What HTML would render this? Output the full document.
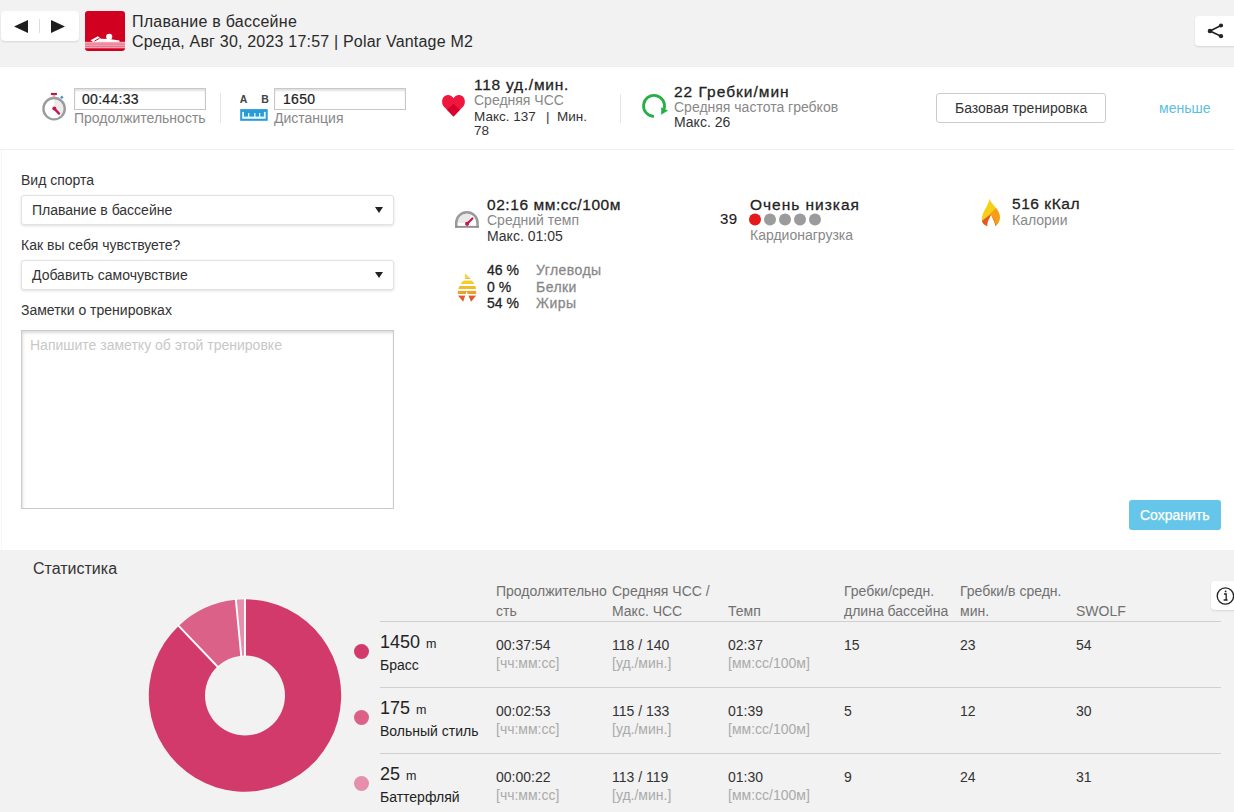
<!DOCTYPE html>
<html><head><meta charset="utf-8">
<style>
*{margin:0;padding:0;box-sizing:border-box}
html,body{width:1234px;height:812px;overflow:hidden}
body{position:relative;background:#f2f2f2;font-family:"Liberation Sans",sans-serif;color:#333}
.a{position:absolute;white-space:nowrap}
.t{position:absolute;white-space:nowrap;line-height:20px}
#hdr{position:absolute;left:0;top:0;width:1234px;height:67px;background:#f2f2f2;border-bottom:1px solid #efefef}
#band{position:absolute;left:0;top:67px;width:1234px;height:83px;background:#fff;border-bottom:1px solid #f0f0f0}
#main{position:absolute;left:0;top:150px;width:1234px;height:400px;background:#fff}
.box{position:absolute;background:#fff;border-radius:4px;box-shadow:0 1px 2px rgba(0,0,0,.12)}
.inp{position:absolute;border:1px solid #c8c8c8;box-shadow:inset 0 2px 2px rgba(0,0,0,.12);background:#fff}
.vdiv{position:absolute;width:1px;background:#e6e6e6}
.sel{position:absolute;border:1px solid #e2e2e2;border-radius:3px;box-shadow:0 1px 3px rgba(0,0,0,.13);background:#fff}
.gray{color:#888}
.dk{color:#222}
.hl{position:absolute;height:1px;background:#d0d0d0;left:380px;width:841px}
</style></head><body>
<div id="hdr"></div>
<div id="band"></div><div class="a" style="left:0;top:65px;width:1234px;height:1px;background:#f5f5f5"></div>
<div id="main"></div><div class="a" style="left:1px;top:150px;width:1px;height:400px;background:#f6f6f6"></div>

<!-- header -->
<div class="box" style="left:1px;top:11px;width:78px;height:30px"></div>
<svg class="a" style="left:14px;top:20px" width="15" height="13"><polygon points="0,6.5 14,0 14,13" fill="#1e1e1e"/></svg>
<div class="a" style="left:39px;top:19px;width:1px;height:14px;background:#ddd"></div>
<svg class="a" style="left:51px;top:20px" width="15" height="13"><polygon points="14,6.5 0,0 0,13" fill="#1e1e1e"/></svg>

<svg class="a" style="left:85px;top:11px" width="40" height="40" viewBox="0 0 40 40">
<rect width="40" height="40" rx="3" fill="#d10020"/>
<circle cx="24.2" cy="25.8" r="3.1" fill="#fff"/>
<path d="M5.5,29.3 L13,25.2 L16,27.8 L24,28 L34.5,29.6 L34.5,31 L12,31 L8,31 Z" fill="#fff"/>
<path d="M9.5,30 L14.5,27.3" stroke="#d10020" stroke-width="1"/>
<rect x="0" y="30.8" width="40" height="6.5" fill="#f4a5b5"/>
<rect x="0" y="32.7" width="40" height="0.7" fill="#e05a74"/>
<rect x="0" y="34.9" width="40" height="0.7" fill="#e05a74"/>
</svg>
<div class="t" style="left:132px;top:12px;font-size:16px;letter-spacing:.25px;color:#2a2a2a">Плавание в бассейне</div>
<div class="t" style="left:132px;top:32px;font-size:16px;letter-spacing:.2px;color:#2a2a2a">Среда, Авг 30, 2023 17:57 | Polar Vantage M2</div>

<div class="box" style="left:1195px;top:16px;width:50px;height:30px"></div>
<svg class="a" style="left:1205px;top:21px" width="22" height="20" viewBox="0 0 22 20">
<path d="M5,10 L16,4.5 M5,10 L16,15.2" stroke="#222" stroke-width="1.6"/>
<circle cx="5" cy="10" r="2.3" fill="#222"/><circle cx="16" cy="4.5" r="2.1" fill="#222"/><circle cx="16" cy="15.2" r="2.1" fill="#222"/>
</svg>

<!-- summary band -->
<svg class="a" style="left:41px;top:92px" width="27" height="30" viewBox="0 0 27 30">
<path d="M13.1,6.3 A10.4,10.4 0 0 1 21,23 L13.1,16.7 Z" fill="#ececec"/>
<circle cx="13.1" cy="16.7" r="10.7" fill="none" stroke="#9c9c9c" stroke-width="2.4"/>
<rect x="9.9" y="0.9" width="6" height="2.1" fill="#a3213f"/>
<rect x="11.6" y="2.9" width="2.8" height="2.2" fill="#f0a6b8"/>
<path d="M19.9,6.2 L21.8,4.5" stroke="#3b9bc9" stroke-width="2.4"/>
<path d="M13.2,16.4 L18,21.6" stroke="#c8174a" stroke-width="2.3" stroke-linecap="round"/>
<circle cx="13.3" cy="16.5" r="2" fill="#c8174a"/>
</svg>
<div class="inp" style="left:74px;top:88px;width:132px;height:22px"></div>
<div class="t" style="left:82px;top:89px;font-size:14px;letter-spacing:.3px;-webkit-text-stroke:.2px #222;color:#222">00:44:33</div>
<div class="t gray" style="left:74px;top:108px;font-size:14px">Продолжительность</div>
<div class="vdiv" style="left:220px;top:93px;height:30px"></div>

<svg class="a" style="left:240px;top:94px" width="29" height="28" viewBox="0 0 29 28">
<text x="-0.3" y="8.9" font-family="Liberation Sans" font-weight="bold" font-size="10.5" fill="#444">A</text>
<text x="21.2" y="8.9" font-family="Liberation Sans" font-weight="bold" font-size="10.5" fill="#444">B</text>
<rect x="0.2" y="15.1" width="27.5" height="11.7" fill="#2a9bd6"/>
<rect x="2.2" y="22.6" width="23.5" height="2.2" fill="#e6fbff"/>
<rect x="2.2" y="17.9" width="1.8" height="5" fill="#e6fbff"/>
<rect x="23.9" y="17.9" width="1.8" height="5" fill="#e6fbff"/>
<rect x="8" y="19" width="1.3" height="4" fill="#e6fbff"/>
<rect x="14.2" y="19" width="1.3" height="4" fill="#e6fbff"/>
<rect x="19" y="19" width="1.3" height="4" fill="#e6fbff"/>
</svg>
<div class="inp" style="left:274px;top:88px;width:132px;height:22px"></div>
<div class="t" style="left:283px;top:89px;font-size:14px;letter-spacing:.3px;-webkit-text-stroke:.2px #222;color:#222">1650</div>
<div class="t gray" style="left:274px;top:108px;font-size:14px">Дистанция</div>

<svg class="a" style="left:441px;top:94px" width="26" height="24" viewBox="0 0 26 24">
<path d="M12.5,22.5 L3,12.8 C-0.5,9 1,1.3 6.8,1.1 C9.6,1 11.3,2.6 12.5,4.2 C13.7,2.6 15.4,1 18.2,1.1 C24,1.3 25.5,9 22,12.8 Z" fill="#f0173e"/>
<path d="M12.5,22.5 L6,15.8 L12.5,9.8 L19,15.8 Z" fill="#d6002c"/>
</svg>
<div class="t" style="left:474px;top:75px;font-size:15.5px;letter-spacing:.75px;-webkit-text-stroke:.28px #222;color:#222">118 уд./мин.</div>
<div class="t gray" style="left:474px;top:90px;font-size:14px">Средняя ЧСС</div>
<div class="t" style="left:474px;top:107px;font-size:13.5px;color:#333">Макс. 137</div><div class="t" style="left:546px;top:107px;font-size:13.5px;color:#333">|</div><div class="t" style="left:557px;top:107px;font-size:13.5px;color:#333">Мин.</div>
<div class="t" style="left:474px;top:121px;font-size:13.5px;color:#333">78</div>
<div class="vdiv" style="left:620px;top:94px;height:29px"></div>

<svg class="a" style="left:640px;top:92px" width="30" height="28" viewBox="0 0 30 28">
<path d="M14,24.4 A10.5,10.5 0 1 1 24.1,16.9" fill="none" stroke="#27ae45" stroke-width="2.8"/>
<polygon points="21.2,15.3 21.2,22.7 28,18.4" fill="#27ae45"/>
</svg>
<div class="t" style="left:674px;top:82px;font-size:15.5px;letter-spacing:1px;-webkit-text-stroke:.28px #222;color:#222">22 Гребки/мин</div>
<div class="t gray" style="left:674px;top:97px;font-size:14px">Средняя частота гребков</div>
<div class="t" style="left:674px;top:112px;font-size:14px;color:#333">Макс. 26</div>

<div class="a" style="left:936px;top:93px;width:170px;height:30px;border:1px solid #ccc;border-radius:3px;background:#fff"></div>
<div class="t" style="left:955px;top:98px;font-size:14px;color:#333">Базовая тренировка</div>
<div class="t" style="left:1159px;top:98px;font-size:14px;color:#5bc0de">меньше</div>

<!-- form -->
<div class="t" style="left:21px;top:170px;font-size:14px;color:#333">Вид спорта</div>
<div class="sel" style="left:21px;top:195px;width:373px;height:29.5px"></div>
<div class="t" style="left:32px;top:200px;font-size:14px;color:#333">Плавание в бассейне</div>
<svg class="a" style="left:375px;top:207px" width="9" height="7"><polygon points="0,0 8,0 4,6" fill="#222"/></svg>
<div class="t" style="left:21px;top:235px;font-size:14px;color:#333">Как вы себя чувствуете?</div>
<div class="sel" style="left:21px;top:260px;width:373px;height:29.5px"></div>
<div class="t" style="left:32px;top:265px;font-size:14px;color:#333">Добавить самочувствие</div>
<svg class="a" style="left:375px;top:272px" width="9" height="7"><polygon points="0,0 8,0 4,6" fill="#222"/></svg>
<div class="t" style="left:21px;top:300px;font-size:14px;color:#333">Заметки о тренировках</div>
<div class="inp" style="left:21px;top:330px;width:373px;height:179px;border-color:#cbcbcb;box-shadow:inset 1px 2px 3px rgba(0,0,0,.14)"></div>
<div class="t" style="left:30px;top:335px;font-size:14px;color:#c8c8c8">Напишите заметку об этой тренировке</div>

<!-- stats -->
<svg class="a" style="left:454px;top:210px" width="26" height="19" viewBox="0 0 26 19">
<path d="M12.9,13 L3.5,13 A9.4,9.4 0 0 1 17.6,4.9 Z" fill="#e9e9e9"/>
<path d="M2.25,17.8 V13 A10.65,10.65 0 0 1 23.55,13 V17.8" fill="none" stroke="#9a9a9a" stroke-width="2.5"/>
<rect x="1" y="15.9" width="23.8" height="1.9" fill="#8f8f8f"/>
<path d="M13.1,13.8 L18.4,8.5" stroke="#c8174a" stroke-width="2.2" stroke-linecap="round"/>
<circle cx="13.1" cy="13.8" r="2.1" fill="#c8174a"/>
</svg>
<div class="t" style="left:487px;top:195px;font-size:15.5px;letter-spacing:.56px;-webkit-text-stroke:.28px #222;color:#222">02:16 мм:сс/100м</div>
<div class="t gray" style="left:487px;top:210px;font-size:14px">Средний темп</div>
<div class="t" style="left:487px;top:226px;font-size:14px;color:#333">Макс. 01:05</div>

<svg class="a" style="left:456px;top:273px" width="22" height="30" viewBox="0 0 22 30">
<defs><linearGradient id="mg" x1="0" y1="0" x2="0" y2="1"><stop offset="0" stop-color="#f6d940"/><stop offset=".45" stop-color="#f0c22e"/><stop offset=".7" stop-color="#eaa12a"/><stop offset=".82" stop-color="#df6a2a"/><stop offset="1" stop-color="#d34f2a"/></linearGradient>
<clipPath id="mc"><path d="M9.2,0.8 L14.6,6 L17.6,9.5 L19.8,14 L20.2,18 V22.6 L15,28.8 L10.6,18.2 L7.2,28.8 L1.9,22.6 V18 L3,14 L5.6,9.5 L8.9,6 Z"/></clipPath></defs>
<g clip-path="url(#mc)">
<rect x="0" y="0" width="22" height="5.6" fill="url(#mg)"/>
<rect x="0" y="7.6" width="22" height="3.4" fill="#f4cf2c"/>
<rect x="0" y="13" width="22" height="3" fill="#f0be26"/>
<rect x="0" y="17.9" width="22" height="3.1" fill="#e9a32a"/>
<rect x="0" y="22.6" width="22" height="7" fill="#dc5c2a"/>
<rect x="0" y="0" width="22" height="5.6" fill="#f5d63c"/>
</g>
</svg>
<div class="t" style="left:487px;top:260px;font-size:14px;-webkit-text-stroke:.28px #222;color:#222">46 %</div>
<div class="t" style="left:487px;top:277px;font-size:14px;-webkit-text-stroke:.28px #222;color:#222">0 %</div>
<div class="t" style="left:487px;top:293px;font-size:14px;-webkit-text-stroke:.28px #222;color:#222">54 %</div>
<div class="t" style="left:536px;top:260px;font-size:14px;letter-spacing:.45px;-webkit-text-stroke:.28px #888;color:#888">Углеводы</div>
<div class="t" style="left:536px;top:277px;font-size:14px;letter-spacing:.45px;-webkit-text-stroke:.28px #888;color:#888">Белки</div>
<div class="t" style="left:536px;top:293px;font-size:14px;letter-spacing:.45px;-webkit-text-stroke:.28px #888;color:#888">Жиры</div>

<div class="t" style="left:720px;top:209px;font-size:15px;letter-spacing:.3px;-webkit-text-stroke:.15px #222;color:#222">39</div>
<div class="t" style="left:750px;top:195px;font-size:15.5px;letter-spacing:.98px;-webkit-text-stroke:.28px #222;color:#222">Очень низкая</div>
<svg class="a" style="left:748px;top:213px" width="75" height="14">
<circle cx="7" cy="6.5" r="6" fill="#e31b1b"/><circle cx="22" cy="6.5" r="6" fill="#9b9b9b"/><circle cx="37" cy="6.5" r="6" fill="#9b9b9b"/><circle cx="52" cy="6.5" r="6" fill="#9b9b9b"/><circle cx="67" cy="6.5" r="6" fill="#9b9b9b"/>
</svg>
<div class="t gray" style="left:750px;top:225px;font-size:14px">Кардионагрузка</div>

<svg class="a" style="left:980px;top:198px" width="22" height="30" viewBox="0 0 22 30">
<defs><clipPath id="fc"><path d="M9.3,0.7 C11,6 19.9,11 19.9,19.5 C19.9,23.5 17.5,26.5 15.2,28.3 C15.6,25 13.5,22 11,16.4 C9.8,20 6.8,23 7.2,28.3 C3.5,26.5 1.8,24 1.8,21.5 C1.8,13 8.5,9 9.3,0.7 Z"/></clipPath></defs>
<g clip-path="url(#fc)">
<rect width="22" height="30" fill="#f7cf16"/>
<polygon points="0,25.6 18.6,7.6 25,7.6 25,30 0,30" fill="#f69e1b"/>
<polygon points="0,24.6 5,20.5 11,16.4 8.5,30 0,30" fill="#e2572a"/>
<polygon points="11,16.4 14.5,22 16.5,30 13,30" fill="#ea6f26"/>
</g>
</svg>
<div class="t" style="left:1012px;top:194px;font-size:15.5px;letter-spacing:.55px;-webkit-text-stroke:.28px #222;color:#222">516 кКал</div>
<div class="t gray" style="left:1012px;top:210px;font-size:14px">Калории</div>

<div class="a" style="left:1129px;top:500px;width:92px;height:30px;background:#66c6ea;border-radius:3px"></div>
<div class="t" style="left:1140px;top:505px;font-size:14px;-webkit-text-stroke:.25px #fff;color:#fff">Сохранить</div>

<!-- statistics -->
<div class="t" style="left:33px;top:559px;font-size:16px;color:#333">Статистика</div>
<div class="box" style="left:1211px;top:581px;width:40px;height:29px"></div>
<svg class="a" style="left:1215px;top:586px" width="20" height="20" viewBox="0 0 20 20">
<circle cx="10.4" cy="10" r="8.2" fill="none" stroke="#222" stroke-width="1.3"/>
<circle cx="10.6" cy="5.4" r="0.9" fill="#222"/>
<path d="M9,8 H11.2 V13.8 M8.6,14 H12.6" fill="none" stroke="#222" stroke-width="1.3"/>
</svg>

<svg class="a" style="left:145px;top:595px" width="200" height="200" viewBox="0 0 200 200" id="donut"><path d="M100.00,4.30 A96.2,96.2 0 1 1 33.61,30.88 L72.40,71.55 A40,40 0 1 0 100.00,60.50 Z" fill="#d13a6b"/><path d="M33.61,30.88 A96.2,96.2 0 0 1 90.86,4.74 L96.20,60.68 A40,40 0 0 0 72.40,71.55 Z" fill="#dc6189"/><path d="M90.86,4.74 A96.2,96.2 0 0 1 100.00,4.30 L100.00,60.50 A40,40 0 0 0 96.20,60.68 Z" fill="#e68fad"/><path d="M100.00,61.50 L100.00,3.30" stroke="#fff" stroke-width="1.9"/><path d="M73.09,72.27 L32.92,30.15" stroke="#fff" stroke-width="1.9"/><path d="M96.29,61.68 L90.76,3.74" stroke="#fff" stroke-width="1.9"/></svg>

<div class="hl" style="top:621px"></div>
<div class="hl" style="top:687px"></div>
<div class="hl" style="top:753px"></div>

<div class="t" style="left:496px;top:581px;font-size:14px;color:#707070;line-height:20px">Продолжительно<br>сть</div>
<div class="t" style="left:612px;top:581px;font-size:14px;color:#707070;line-height:20px">Средняя ЧСС /<br>Макс. ЧСС</div>
<div class="t" style="left:728px;top:601px;font-size:14px;color:#707070">Темп</div>
<div class="t" style="left:844px;top:581px;font-size:14px;color:#707070;line-height:20px">Гребки/средн.<br>длина бассейна</div>
<div class="t" style="left:960px;top:581px;font-size:14px;color:#707070;line-height:20px">Гребки/в средн.<br>мин.</div>
<div class="t" style="left:1076px;top:601px;font-size:14px;color:#707070">SWOLF</div>

<div class="a" style="left:354px;top:644px;width:15px;height:15px;border-radius:50%;background:#d13a6b"></div>
<div class="t" style="left:380px;top:632px;font-size:18px;color:#222">1450 <span style="font-size:12.5px;margin-left:1px">m</span></div>
<div class="t" style="left:380px;top:655px;font-size:14px;color:#222">Брасс</div>
<div class="t" style="left:496px;top:635px;font-size:14px;color:#333">00:37:54</div>
<div class="t" style="left:496px;top:653px;font-size:14px;color:#aaa">[чч:мм:сс]</div>
<div class="t" style="left:612px;top:635px;font-size:14px;color:#333">118 / 140</div>
<div class="t" style="left:612px;top:653px;font-size:14px;color:#aaa">[уд./мин.]</div>
<div class="t" style="left:728px;top:635px;font-size:14px;color:#333">02:37</div>
<div class="t" style="left:728px;top:653px;font-size:14px;color:#aaa">[мм:сс/100м]</div>
<div class="t" style="left:844px;top:635px;font-size:14px;color:#333">15</div>
<div class="t" style="left:960px;top:635px;font-size:14px;color:#333">23</div>
<div class="t" style="left:1076px;top:635px;font-size:14px;color:#333">54</div>
<div class="a" style="left:354px;top:710px;width:15px;height:15px;border-radius:50%;background:#dc6189"></div>
<div class="t" style="left:380px;top:698px;font-size:18px;color:#222">175 <span style="font-size:12.5px;margin-left:1px">m</span></div>
<div class="t" style="left:380px;top:721px;font-size:14px;color:#222">Вольный стиль</div>
<div class="t" style="left:496px;top:701px;font-size:14px;color:#333">00:02:53</div>
<div class="t" style="left:496px;top:719px;font-size:14px;color:#aaa">[чч:мм:сс]</div>
<div class="t" style="left:612px;top:701px;font-size:14px;color:#333">115 / 133</div>
<div class="t" style="left:612px;top:719px;font-size:14px;color:#aaa">[уд./мин.]</div>
<div class="t" style="left:728px;top:701px;font-size:14px;color:#333">01:39</div>
<div class="t" style="left:728px;top:719px;font-size:14px;color:#aaa">[мм:сс/100м]</div>
<div class="t" style="left:844px;top:701px;font-size:14px;color:#333">5</div>
<div class="t" style="left:960px;top:701px;font-size:14px;color:#333">12</div>
<div class="t" style="left:1076px;top:701px;font-size:14px;color:#333">30</div>
<div class="a" style="left:354px;top:776px;width:15px;height:15px;border-radius:50%;background:#e68fad"></div>
<div class="t" style="left:380px;top:764px;font-size:18px;color:#222">25 <span style="font-size:12.5px;margin-left:1px">m</span></div>
<div class="t" style="left:380px;top:787px;font-size:14px;color:#222">Баттерфляй</div>
<div class="t" style="left:496px;top:767px;font-size:14px;color:#333">00:00:22</div>
<div class="t" style="left:496px;top:785px;font-size:14px;color:#aaa">[чч:мм:сс]</div>
<div class="t" style="left:612px;top:767px;font-size:14px;color:#333">113 / 119</div>
<div class="t" style="left:612px;top:785px;font-size:14px;color:#aaa">[уд./мин.]</div>
<div class="t" style="left:728px;top:767px;font-size:14px;color:#333">01:30</div>
<div class="t" style="left:728px;top:785px;font-size:14px;color:#aaa">[мм:сс/100м]</div>
<div class="t" style="left:844px;top:767px;font-size:14px;color:#333">9</div>
<div class="t" style="left:960px;top:767px;font-size:14px;color:#333">24</div>
<div class="t" style="left:1076px;top:767px;font-size:14px;color:#333">31</div>
</body></html>
